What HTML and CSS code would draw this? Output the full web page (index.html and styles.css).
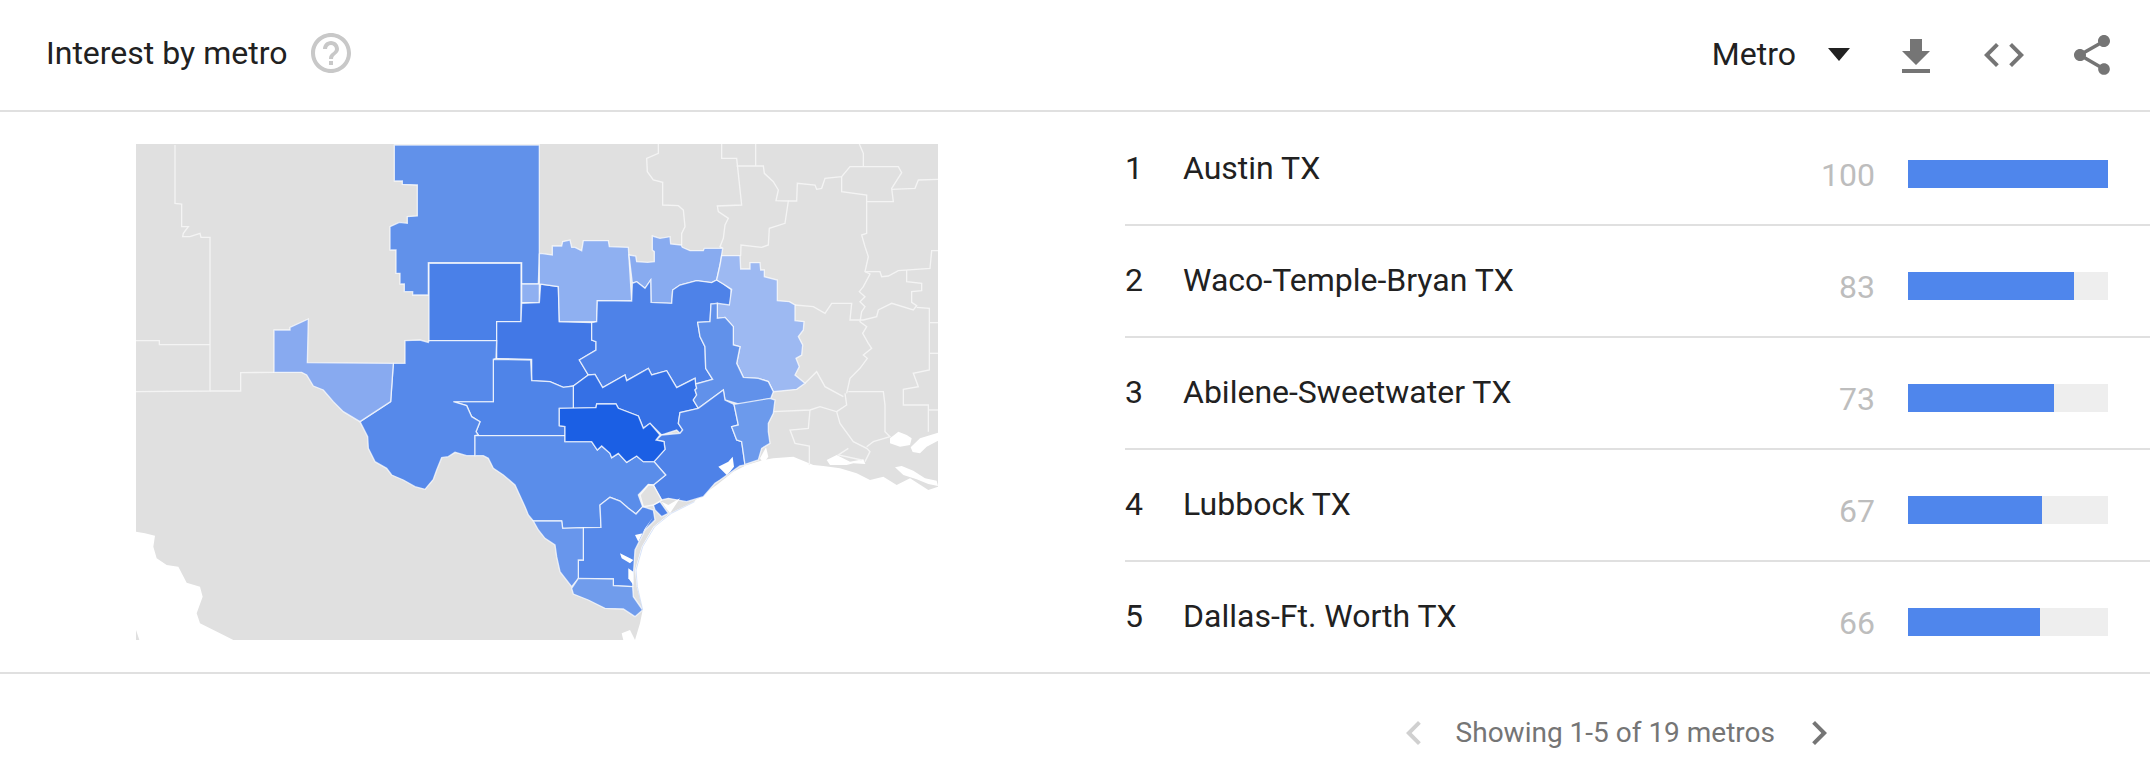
FILE: index.html
```html
<!DOCTYPE html>
<html lang="en">
<head>
<meta charset="utf-8">
<title>Interest by metro</title>
<link rel="stylesheet" href="styles.css">
</head>
<body>
<main class="card">
  <header class="head">
    <h2 class="title">Interest by metro</h2>
    <svg class="icon help" viewBox="0 0 24 24"><path d="M11 18h2v-2h-2v2zm1-16C6.48 2 2 6.48 2 12s4.48 10 10 10 10-4.48 10-10S17.52 2 12 2zm0 18c-4.41 0-8-3.59-8-8s3.59-8 8-8 8 3.59 8 8-3.59 8-8 8zm0-14c-2.21 0-4 1.79-4 4h2c0-1.1.9-2 2-2s2 .9 2 2c0 2-3 1.75-3 5h2c0-2.25 3-2.5 3-5 0-2.21-1.79-4-4-4z"/></svg>
    <div class="tools">
      <span class="select">Metro</span>
      <svg class="caret" viewBox="0 0 22 13"><path d="M0 0h22L11 13z"/></svg>
      <svg class="icon tool dl" viewBox="0 0 24 24"><path d="M19 9h-4V3H9v6H5l7 7 7-7zM5 18v2h14v-2H5z"/></svg>
      <svg class="icon tool" viewBox="0 0 24 24"><path d="M9.4 16.6L4.8 12l4.6-4.6L8 6l-6 6 6 6 1.4-1.4zm5.2 0l4.6-4.6-4.6-4.6L16 6l6 6-6 6-1.4-1.4z"/></svg>
      <svg class="icon tool" viewBox="0 0 24 24"><path d="M18 16.08c-.76 0-1.44.3-1.96.77L8.91 12.7c.05-.23.09-.46.09-.7s-.04-.47-.09-.7l7.05-4.11c.54.5 1.25.81 2.04.81 1.66 0 3-1.34 3-3s-1.34-3-3-3-3 1.34-3 3c0 .24.04.47.09.7L8.04 9.81C7.5 9.31 6.79 9 6 9c-1.66 0-3 1.34-3 3s1.34 3 3 3c.79 0 1.5-.31 2.04-.81l7.12 4.16c-.05.21-.08.43-.08.65 0 1.61 1.31 2.92 2.92 2.92 1.61 0 2.92-1.31 2.92-2.92s-1.31-2.92-2.92-2.92z"/></svg>
    </div>
  </header>
  <section class="body">
    <div class="map-wrap">
      <svg class="map" viewBox="48 42 2406 1488">
        <path class="land" d="M48,42H2454V1070L2425,1080 2370,1045 2330,1065 2290,1040 2250,1050 2210,1030 2160,1015 2110,1008 2080,1005 2020,980 1960,985 1930,990 1880,1005 1840,1025 1790,1065 1720,1115 1650,1150 1600,1190 1565,1250 1545,1320 1550,1370 1568,1440 1560,1480 1545,1530H340L300,1510 240,1480 230,1450 248,1400 240,1370 200,1358 175,1310 140,1305 110,1285 100,1250 105,1217 75,1210 48,1205Z"/>
        <path class="land" d="M48,1500L58,1530H48Z"/>
        <path class="hole" d="M2310,925L2335,905 2360,915 2375,925 2370,945 2340,950 2310,940Z"/>
        <path class="hole" d="M2372,952L2400,925 2454,908V932L2420,950 2400,970 2378,966Z"/>
        <path class="hole" d="M2120,990L2150,975 2190,995 2230,988 2236,1002 2200,1000 2180,1005 2130,1005Z"/>
        <path class="hole" d="M1920,985L1938,952 1945,980 1930,1000Z"/>
        <path class="hole" d="M2325,1012L2345,1008 2380,1022 2415,1045 2450,1052 2454,1068 2425,1062 2390,1048 2350,1035Z"/>
        <path class="hole" d="M1505,1510L1530,1500 1545,1530H1510Z"/>
        <g class="borders">
          <polyline points="165,45 165,220 185,222 185,290 205,290 190,310 188,320 210,320 240,310 243,322 270,322 270,783 48,785"/>
          <polyline points="48,632 118,632 118,644 270,644"/>
          <polyline points="270,783 362,783 362,728 462,727"/>
          <polyline points="1615,42 1615,70 1580,85 1582,125 1600,150 1628,157 1628,225 1675,227 1690,240 1695,290 1685,310 1685,345"/>
          <polyline points="1805,42 1805,85 1850,85 1865,225 1792,228 1795,245 1825,265 1815,285 1810,325 1800,350 1808,355"/>
          <polyline points="1850,108 1930,108 1933,130 1960,155 1975,180 1968,212 2005,213 1995,280 1948,295 1945,345 1925,352 1863,345 1862,377"/>
          <polyline points="1907,42 1907,108"/>
          <polyline points="2005,213 2030,213 2032,160 2085,165 2090,178 2105,175 2115,145 2165,140 2190,110 2335,110 2345,128 2315,175 2320,215 2240,215"/>
          <polyline points="2165,140 2165,185 2240,195 2240,310 2225,315 2235,350 2245,380 2235,425 2250,432 2230,470 2218,485 2235,500 2220,515 2235,530 2225,545 2220,575 2240,590 2228,610 2245,640 2255,655 2230,675 2242,685 2220,715 2190,745 2180,790"/>
          <polyline points="2315,178 2385,175 2395,150 2454,148"/>
          <polyline points="2218,42 2230,70 2230,110"/>
          <polyline points="2235,425 2280,425 2285,440 2305,438 2335,422 2430,415 2435,362 2454,362"/>
          <polyline points="2360,420 2360,455 2405,460 2405,482 2375,485 2375,517 2390,527 2380,540 2315,520 2275,540 2270,560 2230,570 2190,570 2195,520 2135,520 2115,550 2080,530 2025,525"/>
          <polyline points="2390,532 2428,535 2428,720 2380,730 2395,770 2350,778 2350,825 2425,825 2425,905"/>
          <polyline points="2428,578 2454,578"/>
          <polyline points="2428,670 2454,670"/>
          <polyline points="2055,760 2090,725 2115,770 2170,800"/>
          <polyline points="2185,785 2290,785 2295,825 2295,905 2310,920 2260,935 2240,950"/>
          <polyline points="1960,845 2070,840 2100,830 2150,845 2160,880 2200,935 2240,955 2250,965 2235,995"/>
          <polyline points="2070,840 2065,895 2010,900 2025,940 2068,948 2068,1005"/>
          <polyline points="2150,845 2180,825 2175,790"/>
          <polyline points="2425,840 2454,840"/>
          <polyline points="2185,955 2155,975 2225,990"/>
        </g>
        <g class="regions">
          <polygon class="c-a" points="823,45 1258,45 1258,372 1255,462 1205,462 1205,398 925,398 925,495 878,495 878,485 853,485 853,462 840,462 840,430 828,430 828,360 810,360 810,290 838,277 862,280 862,260 892,258 892,165 847,163 847,153 823,153"/>
          <polygon class="c-lub" points="927,400 1203,400 1203,575 1130,575 1130,632 927,632"/>
          <polygon class="c-wf" points="1205,462 1258,462 1258,518 1205,518"/>
          <polygon class="c-abi" points="1205,520 1258,518 1262,462 1315,470 1318,575 1415,578 1415,630 1428,635 1428,660 1378,690 1405,735 1360,768 1330,772 1290,755 1235,752 1235,688 1130,685 1130,575 1203,575"/>
          <polygon class="c-wf" points="1258,372 1262,370 1297,375 1297,348 1325,348 1328,335 1350,330 1355,352 1365,352 1385,362 1390,332 1465,332 1468,350 1525,352 1535,513 1432,512 1430,575 1318,575 1315,470 1258,462"/>
          <polygon class="c-sh" points="1527,375 1547,378 1550,395 1583,397 1603,395 1603,365 1597,360 1597,318 1620,325 1650,320 1652,342 1683,345 1687,352 1710,362 1750,362 1753,355 1808,355 1800,405 1790,450 1775,458 1730,452 1680,465 1658,480 1655,520 1593,517 1592,450 1575,475 1550,455 1537,460"/>
          <polygon class="c-dal" points="1432,512 1535,513 1537,460 1550,455 1575,475 1592,450 1593,517 1655,520 1658,480 1680,465 1730,452 1775,458 1790,450 1810,462 1833,478 1833,520 1828,527 1773,522 1770,575 1733,577 1740,620 1755,650 1757,715 1778,748 1727,762 1725,745 1670,773 1640,722 1595,735 1585,715 1520,752 1515,735 1448,773 1425,733 1405,735 1378,690 1428,660 1428,635 1415,630 1415,578 1430,575"/>
          <polygon class="c-wac" points="1360,768 1405,735 1425,733 1448,773 1515,735 1520,752 1585,715 1595,735 1640,722 1670,773 1725,745 1727,762 1730,775 1725,780 1730,795 1720,810 1735,835 1680,848 1675,880 1688,900 1680,910 1670,900 1625,915 1590,880 1570,895 1555,858 1495,835 1488,822 1430,822 1428,833 1360,835"/>
          <polygon class="c-sa" points="1120,688 1232,690 1235,752 1290,755 1330,772 1360,768 1360,835 1318,835 1318,887 1335,890 1335,917 1065,917 1075,915 1068,905 1080,875 1055,860 1040,827 1000,815 1120,815"/>
          <polygon class="c-ode" points="820,700 855,700 855,632 900,630 925,637 927,632 1130,632 1128,685 1120,688 1120,815 1000,815 1040,827 1055,860 1080,875 1068,905 1075,915 1065,917 1065,977 1040,977 1005,967 985,980 965,983 950,1020 940,1048 915,1078 885,1070 850,1050 815,1035 800,1015 765,995 745,955 743,920 720,875 812,815"/>
          <polygon class="c-wf2" points="462,600 510,600 510,592 565,567 562,698 820,700 812,815 720,875 670,845 640,815 610,780 580,768 560,735 545,727 462,727"/>
          <polygon class="c-shv" points="1805,377 1860,377 1862,417 1890,417 1890,398 1920,398 1922,420 1933,420 1933,440 1972,450 1972,512 2008,515 2025,525 2025,572 2052,575 2050,600 2035,620 2048,645 2045,675 2028,685 2038,710 2025,735 2055,760 2030,778 1960,785 1945,755 1915,745 1870,742 1850,700 1860,650 1840,645 1840,590 1815,562 1792,565 1792,520 1828,525 1835,478 1810,462 1790,450 1800,405"/>
          <polygon class="c-a" points="1770,575 1773,522 1792,520 1792,565 1815,562 1840,590 1840,645 1860,650 1850,700 1870,742 1915,745 1945,755 1960,785 1952,806 1860,823 1815,810 1810,780 1735,835 1720,810 1730,795 1725,780 1730,775 1727,762 1778,748 1757,715 1755,650 1740,620 1733,577"/>
          <polygon class="c-dal" points="1810,780 1735,835 1680,848 1675,880 1688,900 1680,910 1625,915 1608,930 1632,935 1635,958 1602,995 1637,1035 1600,1065 1625,1110 1645,1105 1700,1115 1750,1100 1785,1060 1800,1050 1860,1008 1875,1005 1865,935 1850,930 1835,890 1855,885 1842,823 1815,810"/>
          <polygon class="c-beu" points="1842,823 1950,805 1965,810 1960,850 1945,880 1945,905 1950,940 1925,955 1915,990 1878,1002 1875,1005 1865,935 1850,930 1835,890 1855,885"/>
          <polygon class="c-sat" points="1065,917 1335,917 1335,935 1415,935 1432,960 1445,948 1470,970 1475,983 1495,970 1520,997 1550,978 1570,995 1602,995 1637,1035 1600,1065 1585,1063 1555,1095 1568,1130 1548,1152 1525,1135 1500,1113 1470,1102 1440,1125 1443,1192 1390,1193 1328,1195 1325,1173 1240,1173 1225,1155 1215,1130 1185,1065 1150,1035 1120,1015 1105,985 1090,977 1065,977"/>
          <polygon class="c-dal" points="1600,1125 1620,1115 1645,1150 1625,1160 1605,1140"/>
          <polygon class="c-crp" points="1390,1193 1443,1192 1440,1125 1470,1102 1500,1113 1525,1135 1548,1152 1568,1130 1600,1140 1605,1170 1575,1200 1545,1260 1538,1370 1480,1367 1480,1347 1375,1345 1375,1290 1390,1290"/>
          <polygon class="c-lar" points="1240,1173 1325,1173 1328,1195 1390,1193 1390,1290 1375,1290 1375,1345 1355,1370 1320,1325 1310,1280 1305,1245 1275,1225 1255,1200"/>
          <polygon class="c-hrl" points="1375,1345 1480,1347 1480,1367 1538,1370 1540,1400 1568,1440 1545,1460 1510,1437 1455,1435 1405,1410 1360,1392 1355,1375"/>
          <polygon class="c-aus" points="1318,835 1428,833 1430,822 1488,822 1495,835 1555,858 1570,895 1590,880 1620,915 1608,930 1632,935 1635,958 1602,995 1570,995 1550,978 1520,997 1495,970 1475,983 1470,970 1445,948 1432,960 1415,935 1335,935 1335,890 1318,887"/>
          <polygon class="c-gray" points="1560,1095 1585,1065 1600,1065 1625,1110 1600,1125 1570,1130"/>
        </g>
        <path class="hole" d="M1795,1010L1825,995 1838,980 1842,1010 1830,1025 1820,1035 1805,1020Z"/>
        <path class="hole" d="M1625,1115L1645,1125 1680,1105 1660,1135 1650,1150 1635,1130Z"/>
        <path class="hole" d="M1500,1270L1530,1285 1540,1290 1530,1300 1505,1285Z"/>
        <path class="hole" d="M1525,1315L1540,1325 1540,1365 1525,1345Z"/>
        <path class="hole" d="M1545,1215L1568,1210 1590,1175 1600,1160 1575,1195 1555,1235Z"/>
        <polyline class="island" points="1568,1440 1552,1370 1548,1320 1568,1250 1604,1190 1654,1150 1724,1115"/>
      </svg>
    </div>
    <ol class="list">
      <li class="row"><span class="rank">1</span><span class="name">Austin TX</span><span class="value">100</span><div class="bar"><div class="fill" style="width:100%"></div></div></li>
      <li class="row"><span class="rank">2</span><span class="name">Waco-Temple-Bryan TX</span><span class="value">83</span><div class="bar"><div class="fill" style="width:83%"></div></div></li>
      <li class="row"><span class="rank">3</span><span class="name">Abilene-Sweetwater TX</span><span class="value">73</span><div class="bar"><div class="fill" style="width:73%"></div></div></li>
      <li class="row"><span class="rank">4</span><span class="name">Lubbock TX</span><span class="value">67</span><div class="bar"><div class="fill" style="width:67%"></div></div></li>
      <li class="row"><span class="rank">5</span><span class="name">Dallas-Ft. Worth TX</span><span class="value">66</span><div class="bar"><div class="fill" style="width:66%"></div></div></li>
    </ol>
  </section>
  <footer class="foot">
    <svg class="icon prev" viewBox="0 0 24 24"><path d="M15.41 7.41L14 6l-6 6 6 6 1.41-1.41L10.83 12z"/></svg>
    <span class="count">Showing 1-5 of 19 metros</span>
    <svg class="icon next" viewBox="0 0 24 24"><path d="M10 6L8.59 7.41 13.17 12l-4.58 4.59L10 18l6-6z"/></svg>
  </footer>
</main>
</body>
</html>
```
FILE: styles.css
```css
* { box-sizing: border-box; }
html, body { margin: 0; background: #fff; }
body { font-family: Roboto, "Noto Sans", sans-serif; color: #212121; }
.card { width: 2150px; height: 784px; display: flex; flex-direction: column; overflow: hidden; }

.head { height: 112px; flex: none; border-bottom: 2px solid #e0e0e0; display: flex; align-items: flex-start; padding: 0 34px 0 46px; }
.title { margin: 30px 0 0; width: 241px; font-size: 32px; line-height: 46px; font-weight: 400; white-space: nowrap; }
.icon { width: 48px; height: 48px; flex: none; display: block; fill: #757575; }
.help { fill: #c8c8c8; margin: 29px 0 0 20px; }
.tools { margin-left: auto; display: flex; align-items: flex-start; padding-top: 31px; }
.select { font-size: 32px; line-height: 46px; margin: 0 32px 0 0; }
.caret { width: 22px; height: 13px; fill: #212121; margin: 17px 42px 0 0; }
.tool { margin-left: 40px; }
.tool.dl { margin: 2px 0 0 0; }

.body { flex: none; height: 562px; border-bottom: 2px solid #e0e0e0; display: flex; }
.map-wrap { width: 1125px; flex: none; padding: 32px 0 0 136px; }
.map { width: 802px; height: 496px; display: block; }
.land { fill: #e0e0e0; }
.hole { fill: #fff; }
.island { fill: none; stroke: #c3d4f6; stroke-width: 2; }
.borders polyline { fill: none; stroke: #f4f4f4; stroke-width: 4; }
.regions polygon { stroke: #fff; stroke-opacity: .72; stroke-width: 4; stroke-linejoin: miter; }
.c-a { fill: #6191ea; }
.c-lub { fill: #4a80e8; }
.c-wf { fill: #8fb0f1; }
.c-wf2 { fill: #88aaf0; }
.c-sh { fill: #88abf0; }
.c-abi { fill: #4278e6; }
.c-dal { fill: #4e82e8; }
.c-wac { fill: #3570e5; }
.c-aus { fill: #1b5fe4; }
.c-sa { fill: #4f84e8; }
.c-ode { fill: #5689ea; }
.c-sat { fill: #5a8dea; }
.c-shv { fill: #9db9f2; }
.c-beu { fill: #6c9aec; }
.c-crp { fill: #5689ea; }
.c-lar { fill: #6896ec; }
.c-hrl { fill: #709cec; }
.c-gray { fill: #e0e0e0; }

.list { flex: 1; margin: 0; padding: 2px 0 0; list-style: none; }
.row { height: 112px; display: flex; align-items: flex-start; padding: 46px 42px 0 0; border-bottom: 2px solid #e0e0e0; }
.row:last-child { border-bottom: 0; height: 110px; }
.rank { width: 58px; flex: none; font-size: 32px; line-height: 46px; margin-top: -15px; }
.name { flex: 1; font-size: 32px; line-height: 46px; margin-top: -15px; white-space: nowrap; }
.value { width: 80px; text-align: right; font-size: 32px; line-height: 46px; margin: -8px 33px 0 0; color: #bdbdbd; }
.bar { width: 200px; height: 28px; flex: none; background: #eeeeee; }
.fill { height: 100%; background: #4f86ec; }

.foot { flex: 1; display: flex; align-items: flex-start; justify-content: flex-end; padding: 35px 307px 0 0; }
.prev { fill: #d0d0d0; margin-right: 18px; }
.next { margin-left: 20px; }
.count { font-size: 28px; line-height: 48px; color: #757575; }
```
